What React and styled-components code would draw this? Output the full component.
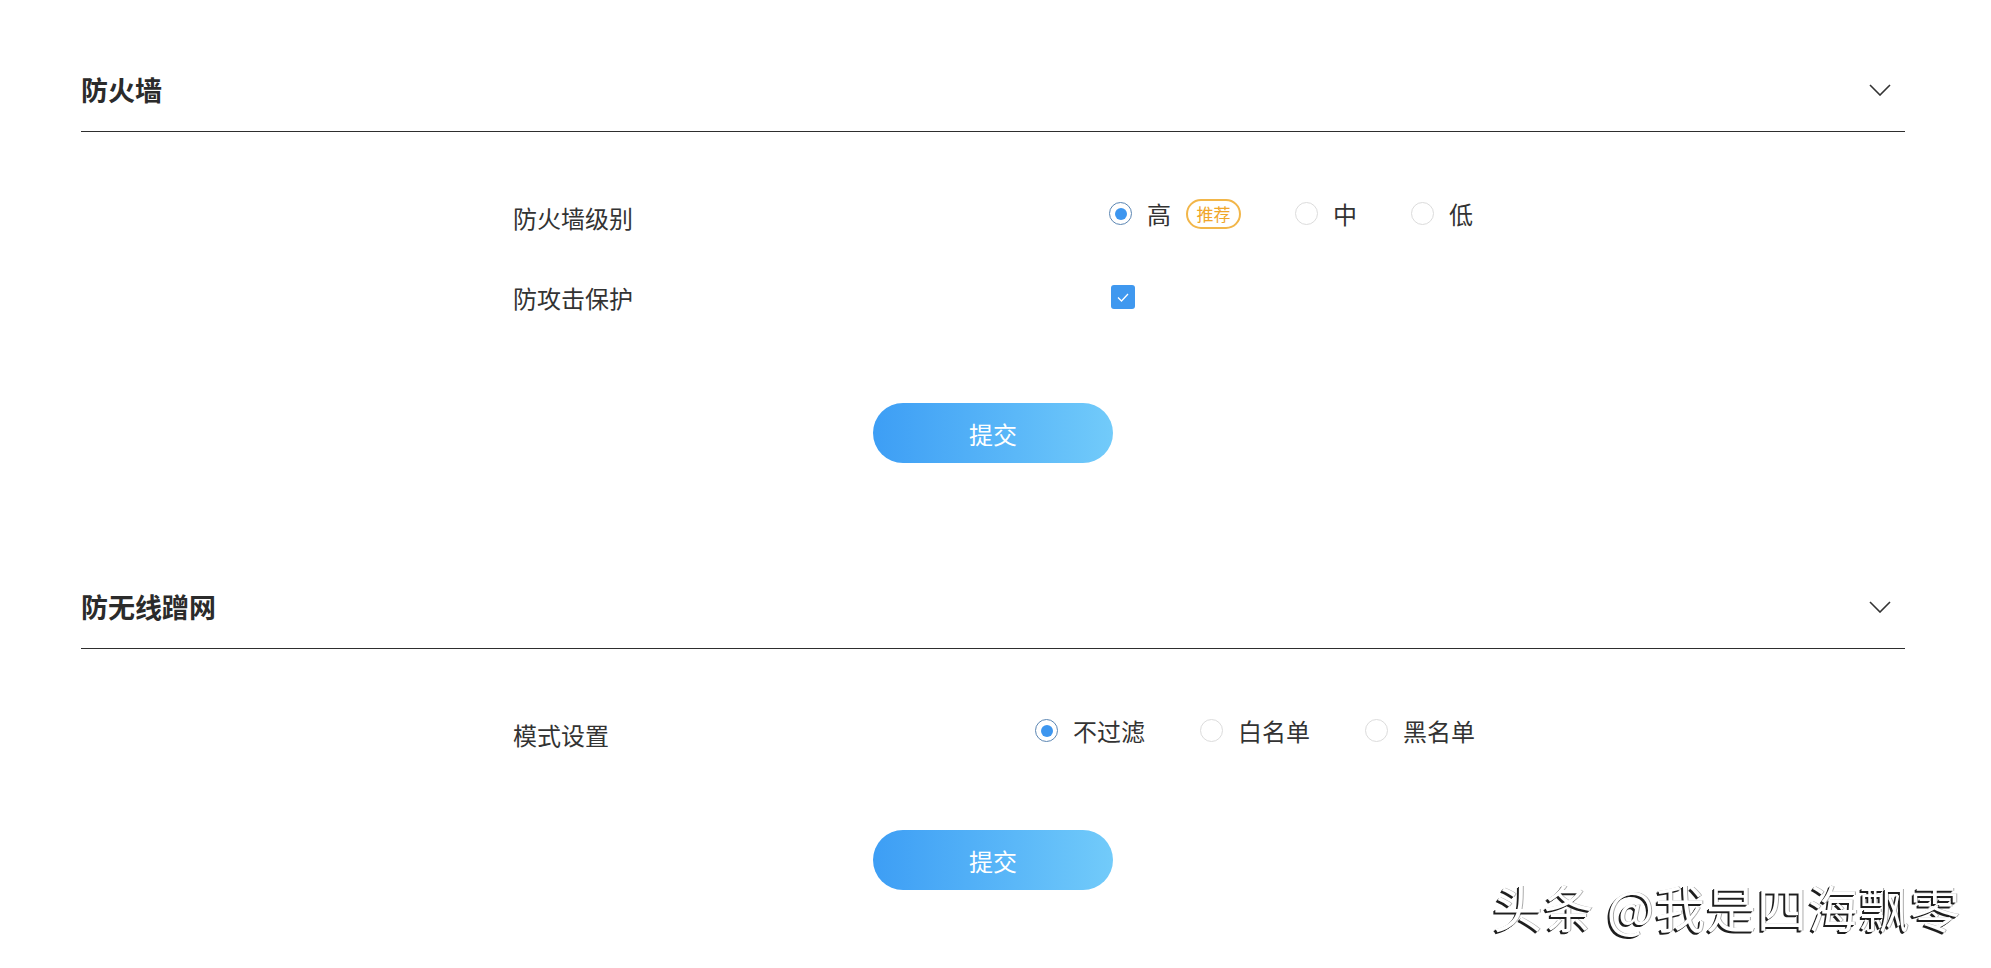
import React, { useState } from 'react'
import styled, { createGlobalStyle } from 'styled-components'

const GlobalStyle = createGlobalStyle`
  body {
    margin: 0;
    background: #fff;
    font-family: "Noto Sans CJK SC", "Noto Sans", sans-serif;
    color: #333;
  }
`

const Page = styled.div`
  position: relative;
  width: 1991px;
  height: 968px;
  box-sizing: border-box;
  padding: 48px 86px 0 81px;
  overflow: hidden;
`

const Section = styled.section`
  margin-bottom: ${p => p.$after || 0}px;
`

const Header = styled.div`
  display: flex;
  align-items: center;
  justify-content: space-between;
  height: 83px;
  border-bottom: 1px solid #2e2e2e;
`

const Title = styled.h2`
  margin: 0;
  font-size: 27px;
  font-weight: 700;
  color: #2b2b2b;
  line-height: 36px;
`

const Chevron = styled.svg`
  width: 22px;
  height: 12px;
  margin-right: 14px;
`

const Body = styled.div`
  padding: 55px 0 0 432px;
`

const Row = styled.div`
  display: grid;
  grid-template-columns: ${p => p.$labelWidth}px auto;
  align-items: center;
  height: 60px;
  & + & {
    margin-top: 20px;
  }
`

const Label = styled.div`
  font-size: 24px;
  color: #333;
`

const RadioGroup = styled.div`
  display: flex;
  align-items: center;
  gap: ${p => p.$gap}px;
  margin-bottom: 7px;
`

const Option = styled.label`
  display: flex;
  align-items: center;
  gap: 15px;
  font-size: 24px;
  color: #333;
  cursor: pointer;
`

const Circle = styled.span`
  box-sizing: border-box;
  width: 23px;
  height: 23px;
  border-radius: 50%;
  border: 1px solid ${p => (p.$on ? '#5b86b3' : '#dcdcdc')};
  display: flex;
  align-items: center;
  justify-content: center;
  &::after {
    content: '';
    width: 12px;
    height: 12px;
    border-radius: 50%;
    background: #3d96ef;
    display: ${p => (p.$on ? 'block' : 'none')};
  }
`

const Badge = styled.span`
  display: inline-flex;
  align-items: center;
  justify-content: center;
  box-sizing: border-box;
  width: 55px;
  height: 30px;
  border: 2px solid #f2b649;
  border-radius: 15px;
  color: #f0a62a;
  font-size: 17px;
  line-height: 1;
`

const Check = styled.span`
  display: flex;
  align-items: center;
  justify-content: center;
  width: 24px;
  height: 24px;
  border-radius: 3px;
  background: #3f98ef;
  margin-left: 2px;
  cursor: pointer;
`

const Submit = styled.button`
  display: block;
  margin: ${p => p.$top}px auto 0;
  width: 240px;
  height: 60px;
  border: none;
  border-radius: 30px;
  background: linear-gradient(90deg, #3d9ef5 0%, #5bb8f8 60%, #72cbfa 100%);
  color: #fff;
  font-family: "Noto Sans CJK SC", sans-serif;
  font-size: 24px;
  cursor: pointer;
`

const Watermark = styled.div`
  position: absolute;
  right: 30px;
  bottom: 26px;
  font-family: "Noto Sans CJK SC", sans-serif;
  font-size: 50px;
  letter-spacing: 1px;
  color: #fff;
  text-shadow: -2px 2px 0 #1e1e1e, -1px 1px 0 #1e1e1e, 1px 0 0 rgba(0,0,0,0.35);
  white-space: nowrap;
`

const Radios = ({ options, value, onChange, gap }) => (
  <RadioGroup $gap={gap}>
    {options.map(o => (
      <Option key={o.key} onClick={() => onChange(o.key)}>
        <Circle $on={value === o.key} />
        {o.text}
        {o.badge && <Badge>{o.badge}</Badge>}
      </Option>
    ))}
  </RadioGroup>
)

const SectionHead = ({ title }) => (
  <Header>
    <Title>{title}</Title>
    <Chevron viewBox="0 0 22 12">
      <path d="M1 1 L11 11 L21 1" fill="none" stroke="#333" strokeWidth="1.6" />
    </Chevron>
  </Header>
)

export default function App() {
  const [level, setLevel] = useState('high')
  const [guard, setGuard] = useState(true)
  const [mode, setMode] = useState('none')

  return (
    <Page>
      <GlobalStyle />
      <Section $after={102}>
        <SectionHead title="防火墙" />
        <Body>
          <Row $labelWidth={596}>
            <Label>防火墙级别</Label>
            <Radios
              gap={54}
              value={level}
              onChange={setLevel}
              options={[
                { key: 'high', text: '高', badge: '推荐' },
                { key: 'mid', text: '中' },
                { key: 'low', text: '低' },
              ]}
            />
          </Row>
          <Row $labelWidth={596}>
            <Label>防攻击保护</Label>
            <div>
              <Check onClick={() => setGuard(!guard)}>
                {guard && (
                  <svg width="12" height="9" viewBox="0 0 12 9">
                    <path d="M1 4.5 L4.5 8 L11 1" fill="none" stroke="#fff" strokeWidth="1.3" />
                  </svg>
                )}
              </Check>
            </div>
          </Row>
        </Body>
        <Submit $top={76}>提交</Submit>
      </Section>

      <Section>
        <SectionHead title="防无线蹭网" />
        <Body>
          <Row $labelWidth={522}>
            <Label>模式设置</Label>
            <Radios
              gap={55}
              value={mode}
              onChange={setMode}
              options={[
                { key: 'none', text: '不过滤' },
                { key: 'white', text: '白名单' },
                { key: 'black', text: '黑名单' },
              ]}
            />
          </Row>
        </Body>
        <Submit $top={66}>提交</Submit>
      </Section>

      <Watermark>头条 @我是四海飘零</Watermark>
    </Page>
  )
}
